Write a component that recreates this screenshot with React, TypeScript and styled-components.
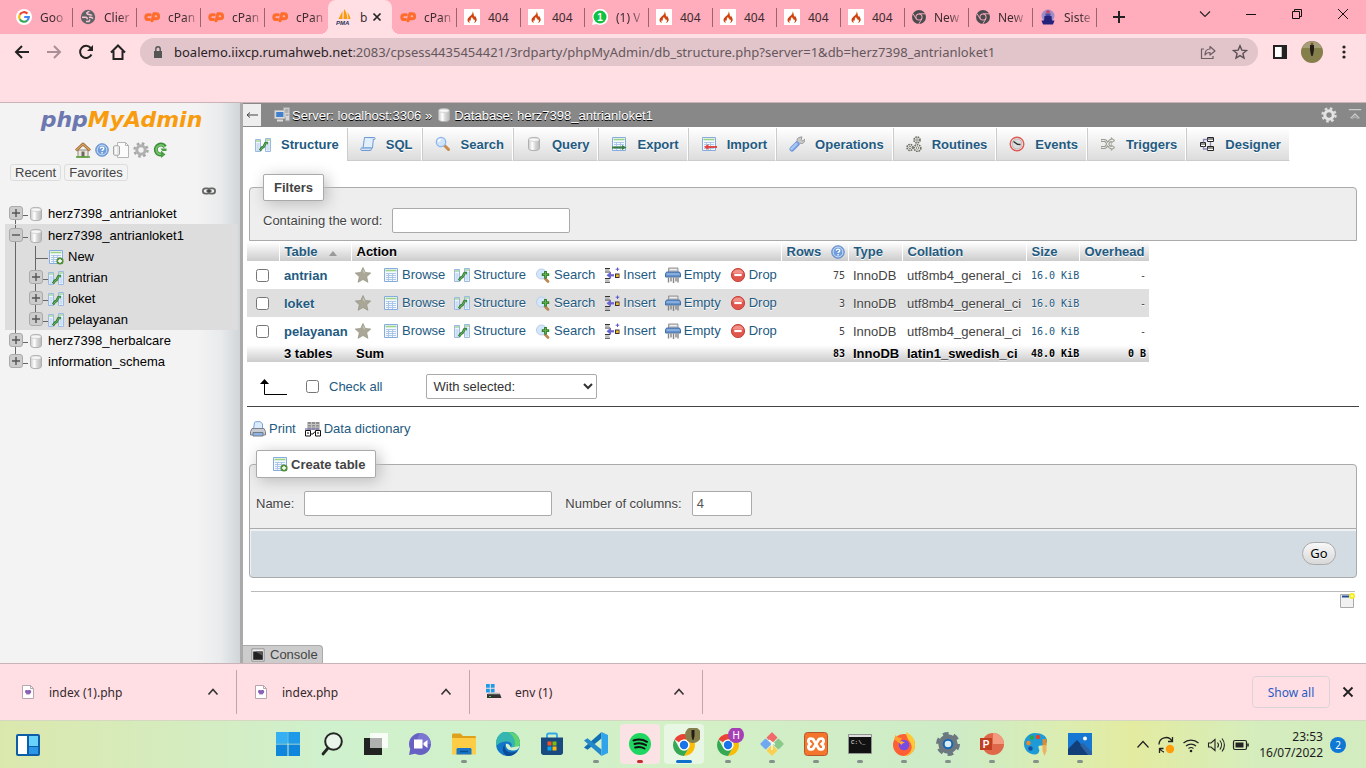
import React from "react";
import styled, { createGlobalStyle, css } from "styled-components";

const ui = `"Noto Sans", "Open Sans", sans-serif`;
const arial = `"Liberation Sans", Arial, sans-serif`;
const mono = `"DejaVu Sans Mono", "Liberation Mono", monospace`;
const linkColor = "#235a81";

const GlobalStyle = createGlobalStyle`
  * { box-sizing: border-box; }
  body { margin: 0; background: #fff; font-family: ${arial}; font-size: 13px; color: #444; }
  button { font: inherit; color: inherit; background: none; border: 0; padding: 0; margin: 0; }
  a { text-decoration: none; color: ${linkColor}; }
  svg { display: block; flex: none; }
  ul { list-style: none; margin: 0; padding: 0; }
`;

const Screen = styled.div`
  display: flex;
  flex-direction: column;
  min-height: 100vh;
  overflow: hidden;
`;

/* ---------- icons ---------- */

const Svg = ({ size = 16, box = 16, children }: { size?: number; box?: number; children: React.ReactNode }) => (
  <svg width={size} height={size} viewBox={`0 0 ${box} ${box}`} fill="none" aria-hidden="true">{children}</svg>
);

const GoogleIcon = () => (
  <Svg>
    <circle cx="8" cy="8" r="8" fill="#fff" />
    <g strokeWidth="2.2">
      <path d="M11.4 4.6A4.8 4.8 0 0 0 3.8 5.7" stroke="#ea4335" />
      <path d="M3.8 5.7a4.8 4.8 0 0 0 0 4.6" stroke="#fbbc05" />
      <path d="M3.8 10.3a4.8 4.8 0 0 0 7.3 1.3" stroke="#34a853" />
      <path d="M11.1 11.6A4.6 4.6 0 0 0 12.8 8H8.2" stroke="#4285f4" />
    </g>
  </Svg>
);
const GlobeIcon = () => (
  <Svg>
    <circle cx="8" cy="8" r="7.2" fill="#5f6368" />
    <path d="M9.5 2.500C6.500 3 6 4.500 8 5.200s3.500.3 4 1.300M2 8.300h3.500c1.500 0 2 .8 1.500 2M9 8.500c1.500-.5 3 0 4 1M6 12.500h3l1-2" stroke="#ffc4cf" strokeWidth="1.500" />
  </Svg>
);
const CpanelIcon = () => (
  <Svg>
    <g stroke="#ff6c2c" strokeWidth="3" strokeLinecap="round" strokeLinejoin="round">
      <path d="M6.300 5.800H4.200a2.300 2.300 0 0 0 0 4.800h1.300" />
      <path d="M8 11.800 9.800 4.800h2.400a2.400 2.400 0 0 1 0 5h-1.700" />
    </g>
  </Svg>
);
const PmaIcon = () => (
  <Svg>
    <path d="M6.500 2v8H2.500zM8 0c2 2 3 5 3.500 10H7.500zM11 3c2 2 3 4 3.500 7h-2.200c0-3-.3-5-1.300-7z" fill="#f89c0e" />
    <text x="0" y="16" fontSize="6" fontWeight="700" fontStyle="italic" fontFamily="Liberation Sans" fill="#26345c">PMA</text>
  </Svg>
);
const FireIcon = () => (
  <Svg>
    <path d="M0 0h16v16H0z" fill="#fff" />
    <path d="M8.400 2c.8 2-.2 3-1.600 4.400C5.200 8 3.300 9 3.500 11.200c.1 1.400 1.200 2.500 2.700 2.900-.9-.8-1.200-1.900-.5-2.900.5.6 1.200.5 1.100-.5 0-1.100.3-2 1.300-2.700-.1 1.500 1.800 1.700 1.800 3.200.5 0 .8-.4.8-.9.700 1.400.2 2.800-.9 3.800 2.300-.6 3.400-2.500 2.700-4.600-.4-1.200-1.200-1.900-1.400-3-.4.400-.5.8-.5 1.400C9.200 6.500 10.300 4.300 8.400 2z" fill="#cf4310" />
  </Svg>
);
const WhatsappIcon = () => (
  <Svg>
    <path d="M0 16 1.200 11.600A8 8 0 1 1 4.600 15z" fill="#fff" />
    <circle cx="8" cy="8" r="6.500" fill="#12c143" />
    <text x="5.200" y="11.500" fontSize="10" fontWeight="700" fontFamily="Liberation Sans" fill="#fff">1</text>
  </Svg>
);
const ChromeIcon = () => (
  <Svg size={14} box={24}>
    <circle cx="12" cy="12" r="12" fill="#4b4b4f" />
    <path d="M12 6.500h11M7 15 1.600 6M17 15l-5.500 9" stroke="#ffadbc" strokeWidth="1.600" />
    <circle cx="12" cy="12" r="6" fill="#ffadbc" />
    <circle cx="12" cy="12" r="4.400" fill="#4b4b4f" />
  </Svg>
);
const EmblemIcon = () => (
  <Svg>
    <circle cx="8" cy="7" r="6.500" fill="#9b8cc8" />
    <path d="M1.500 11.500h13l-1.500 4H3z" fill="#25227c" />
    <path d="M4.500 7h7l.5 5H4z" fill="#25227c" /><path d="M5.500 4.500h5V7h-5z" fill="#4a49a0" />
    <path d="M8 1v3.500M6 3h4" stroke="#d04060" strokeWidth="1.500" />
  </Svg>
);

const StructureIcon = () => (
  <Svg>
    <path d="M.5 2.500h5v12h-5zM10.500 1.500h5v13h-5z" fill="#f2f7fd" stroke="#9abae3" />
    <path d="M1 4h4M11 3h4" stroke="#a5d690" strokeWidth="1.400" />
    <path d="M1 7h4M1 9h4M1 11h4M1 13h4M11 6h4M11 8h4M11 10h4M11 12h4M3 6v8M13 5v9" stroke="#b9d0ec" strokeWidth=".8" />
    <path d="M5 13.500 7 10.500l1.500-.5L10.500 6h2.500" stroke="#2f7a35" strokeWidth="2.600" strokeLinejoin="round" />
    <path d="M5.500 13 7.200 10.500l1.500-.6 1.800-3.700h2" stroke="#6cba62" strokeWidth="1" />
  </Svg>
);
const Sheet = () => (
  <>
    <path d="M1.500 1.500h13v13h-13z" fill="#f5f9fe" stroke="#86acdf" />
    <path d="M2.500 3.500h11" stroke="#9ad388" strokeWidth="1.600" />
    <path d="M3 6.500h10M3 8.500h10M3 10.500h10M3 12.500h10M5.500 6v8M9.500 6v8" stroke="#a6c2e6" strokeWidth=".9" />
  </>
);
const BrowseIcon = () => <Svg><Sheet /></Svg>;
const NewTableIcon = () => (
  <Svg>
    <Sheet />
    <circle cx="12" cy="12" r="3.600" fill="#4f8f35" />
    <path d="M12 9.900v4.200M9.900 12h4.200" stroke="#fff" strokeWidth="1.400" />
  </Svg>
);
const ExportIcon = () => (
  <Svg>
    <Sheet />
    <path d="M1 11.500h11" stroke="#3a7d3c" strokeWidth="2" />
    <path d="m11 9 4.500 2.500L11 14z" fill="#3a7d3c" />
  </Svg>
);
const ImportIcon = () => (
  <Svg>
    <Sheet />
    <path d="M6 11h10" stroke="#e03a34" strokeWidth="1.800" />
    <path d="m7.500 8-4.500 3 4.500 3z" fill="#e8433c" />
  </Svg>
);
const SqlIcon = () => (
  <Svg>
    <path d="M4.500 1.500h9L12.500 12H3z" fill="#e2effc" stroke="#6f9ad3" />
    <path d="M4.500 1.500h10c.8 0 .8 2 0 2h-1.300" fill="#cfe2f8" stroke="#6f9ad3" />
    <path d="M1.500 12h10c-.5 1.500 0 2.500-1 2.500H1.500c-1 0-1-2.500 0-2.500z" fill="#cfe2f8" stroke="#6f9ad3" />
  </Svg>
);
const SearchIcon = () => (
  <Svg>
    <path d="m9.500 9.500 4 4" stroke="#c98a4b" strokeWidth="3" strokeLinecap="round" />
    <circle cx="6" cy="6" r="4.700" fill="#cfe3fa" stroke="#8fb6ea" strokeWidth="1.300" />
    <path d="M3.500 6A2.500 2.500 0 0 1 6 3.500" stroke="#fff" strokeWidth="1.300" />
  </Svg>
);
const SearchPlusIcon = () => (
  <Svg>
    <path d="m9.500 11 3.500 3.500" stroke="#b98752" strokeWidth="2.600" strokeLinecap="round" />
    <circle cx="6.500" cy="7" r="5" fill="#d5e6f8" stroke="#b5cfee" />
    <path d="M10.500 4v7.500M6.800 7.700h7.400" stroke="#2f7f2c" strokeWidth="2.800" />
    <path d="M10.500 5v5.500M8 7.700h5" stroke="#62b553" strokeWidth="1" />
  </Svg>
);
const DbIcon = () => (
  <Svg>
    <defs>
      <linearGradient id="cyl" x1="0" x2="1">
        <stop stopColor="#cacaca" /><stop offset=".35" stopColor="#fff" /><stop offset=".6" stopColor="#d8d8d8" /><stop offset="1" stopColor="#b8b8b8" />
      </linearGradient>
    </defs>
    <path d="M2.500 3.500c0-2.800 11-2.800 11 0v9c0 2.800-11 2.800-11 0z" fill="url(#cyl)" stroke="#b0b0b0" />
    <ellipse cx="8" cy="3.700" rx="5" ry="1.800" fill="#f6f6f6" stroke="#c4c4c4" strokeWidth=".6" />
  </Svg>
);
const WrenchIcon = () => (
  <Svg>
    <path d="M10 1.500 13 .8l-.8 3 1.600 1 2-1.600c.5 3-2 5-4.600 4.200L9.500 9 7 6.500l1-1.700c-.2-1.500.5-2.800 2-3.300z" fill="#c9c9c9" stroke="#8d8d8d" strokeWidth=".8" />
    <path d="m8 8-5 5" stroke="#6f98dd" strokeWidth="5" strokeLinecap="round" />
    <path d="m7.500 7.800-5 5" stroke="#a9c6f5" strokeWidth="2.500" strokeLinecap="round" />
  </Svg>
);
const RoutinesIcon = () => (
  <Svg>
    <g fill="#f2f2ee" stroke="#6c6c64" strokeWidth="1.600" strokeDasharray="1.600 .8">
      <circle cx="11" cy="4" r="3" /><circle cx="4" cy="11.500" r="3" /><circle cx="11.500" cy="12" r="3.300" />
    </g>
    <g fill="#fff" stroke="#6c6c64" strokeWidth=".8"><circle cx="11" cy="4" r="1.200" /><circle cx="4" cy="11.500" r="1.200" /><circle cx="11.500" cy="12" r="1.300" /></g>
  </Svg>
);
const EventsIcon = () => (
  <Svg>
    <circle cx="8" cy="8" r="6.800" fill="#f4f4f4" stroke="#e05a55" strokeWidth="1.400" />
    <circle cx="8" cy="8" r="5" fill="#ddd" stroke="#aaa" strokeWidth=".8" />
    <path d="m4.500 5.500 4 2.800 3 .2" stroke="#333" strokeWidth="1.500" />
  </Svg>
);
const TriggersIcon = () => (
  <Svg>
    <path d="M1 4.500h3.500c3 0 3.500 7 6.500 7h1M1 11.500h3.500c3 0 3.500-7 6.500-7h1" stroke="#9b9b94" strokeWidth="2.800" />
    <path d="m11 1.500 4 3-4 3zM11 8.500l4 3-4 3z" fill="#b8b8b0" stroke="#9b9b94" strokeWidth=".6" />
    <path d="M1.500 4.500h3c3 0 3.500 7 6.500 7h2M1.500 11.500h3c3 0 3.500-7 6.500-7h2" stroke="#efefea" strokeWidth="1" />
  </Svg>
);
const DesignerIcon = () => (
  <Svg>
    <path d="M8.500 1.500h6v4h-6zM8.500 10.500h6v4h-6zM1.500 6.500h5v4h-5z" fill="#fff" stroke="#222" />
    <path d="M8.500 3h6M8.500 12h6M1.500 8h5" stroke="#222" strokeWidth="1.200" />
    <path d="M4.500 6.500v-3h4M4.500 10.500v2.500h4M11.500 6v4" stroke="#8a87b8" strokeWidth="1.300" />
  </Svg>
);
const StarIcon = () => (
  <Svg>
    <path d="m8 .5 2.300 5 5.400.5-4 3.700 1.200 5.600L8 12.500l-4.900 2.800 1.200-5.600L.3 6l5.400-.5z" fill="#aaa797" stroke="#949284" strokeWidth=".7" />
    <path d="m8 3 1.500 3.500" stroke="#cfcdc2" />
  </Svg>
);
const InsertIcon = () => (
  <Svg>
    <path d="M1 1.500h5M1 15.300h5M1 5h5M1 11.500h5" stroke="#333" strokeWidth="1.100" />
    <path d="M1 3.200h4.500M1 13.400h4.500" stroke="#bbb" strokeWidth="2.200" />
    <path d="M5 8.300h5" stroke="#6a67d0" strokeWidth="2.200" />
    <path d="M7 4.500 2.500 8.300 7 12z" fill="#6a67d0" />
    <path d="M11 6.500h4.500V11H11z" fill="#333" /><path d="M12 7.500h2.800V10H12z" fill="#f2b430" />
    <path d="M13.500.5v3.500M11.700 2.200h3.600" stroke="#5a57c9" />
  </Svg>
);
const EmptyIcon = () => (
  <Svg>
    <path d="M3.500 1h9.500v4.500H3.500z" fill="#c9c9c9" stroke="#999" />
    <path d="M5 2.500h7" stroke="#f0f0f0" />
    <path d="M1.500 5h13l1 2v3H.5V7z" fill="#6793cb" stroke="#426fa8" />
    <path d="M1.500 7h13" stroke="#a7c7ec" />
    <path d="M3.500 10.500v5M6 10.500v4M8.500 10.500v5.500M11 10.500v4M13 10.500v5" stroke="#858585" strokeWidth="1.400" />
  </Svg>
);
const DropIcon = () => (
  <Svg>
    <circle cx="8" cy="8" r="6.600" fill="#e2554c" stroke="#c9463f" />
    <path d="M2.600 6.500a5.600 5.600 0 0 1 10.800 0z" fill="#f0918a" />
    <path d="M4.300 8h7.400" stroke="#fff" strokeWidth="2.200" />
  </Svg>
);
const HelpIcon = () => (
  <Svg size={14}>
    <circle cx="8" cy="8" r="7.200" fill="#6f9cda" stroke="#5d88c8" />
    <circle cx="8" cy="8" r="5.600" stroke="#d3e3f7" strokeWidth="1.100" />
    <path d="M6 6.400c.3-2.400 4.200-2.200 4 .2-.1 1.200-1.900 1.200-1.900 2.600M8.100 10.400v1.500" stroke="#fff" strokeWidth="1.600" />
  </Svg>
);
const HomeIcon = () => (
  <Svg>
    <path d="M3 8h10v7H3z" fill="#ece7dd" stroke="#8f8a80" />
    <path d="M1 8.500 8 2l7 6.500" stroke="#9b6b35" strokeWidth="3" strokeLinejoin="round" />
    <path d="M1.200 8.300 8 2l6.800 6.300" stroke="#d9a366" strokeWidth="1.200" />
    <path d="M6.500 9.500h3V15h-3z" fill="#6d6a66" /><path d="M1 15h14" stroke="#5aa03a" strokeWidth="1.600" />
  </Svg>
);
const DocsIcon = () => (
  <Svg>
    <path d="M4.500.5h8l3 3v12h-11z" fill="#fbfbfb" stroke="#b5b5b5" /><path d="M12.500.5v3h3" stroke="#b5b5b5" />
    <path d="M.5 5c0-2 6-2 6 0v7c0 2-6 2-6 0z" fill="#e5e5e5" stroke="#a5a5a5" /><path d="M3 5v7" stroke="#fff" strokeWidth="1.500" />
  </Svg>
);
const GearIcon = ({ light = false }: { light?: boolean }) => (
  <Svg>
    <circle cx="8" cy="8" r="6.500" stroke={light ? "#ddd" : "#a5a5a5"} strokeWidth="2.400" strokeDasharray="2.600 2.505" />
    <circle cx="8" cy="8" r="4.200" stroke={light ? "#e4e4e4" : "#b0b0b0"} strokeWidth="3" />
  </Svg>
);
const ReloadGreenIcon = () => (
  <Svg>
    <path d="M12 4.800A5 5 0 1 0 8.500 12.500" stroke="#3d8b3b" strokeWidth="4" />
    <path d="M11.700 5.100A4.600 4.600 0 1 0 8.500 12.200" stroke="#74c56a" strokeWidth="1.700" />
    <path d="M8 8.500V16l4.500-3.500zM7.500 6.500h6V9h-4z" fill="#4ba045" />
  </Svg>
);
const LinkIcon = () => (
  <Svg size={14}>
    <rect x="1" y="5" width="8" height="6" rx="3" stroke="#666" strokeWidth="2" />
    <rect x="7" y="5" width="8" height="6" rx="3" stroke="#666" strokeWidth="2" />
    <path d="M5 8h6" stroke="#333" strokeWidth="1.400" />
  </Svg>
);
const ServerIcon = () => (
  <Svg>
    <path d="M9.500.8h6v13h-4v-3h-2z" fill="#d8d8d8" stroke="#aaa" /><path d="M11 3h3.500M11 5h3.500M12 8h2.500" stroke="#888" />
    <path d="M.8 3.500h10v8H.8z" fill="#ddd" stroke="#bbb" /><path d="M2.200 5h7.200v5H2.200z" fill="#3f7fcb" />
    <path d="M3 13.500h6" stroke="#ddd" strokeWidth="2" />
  </Svg>
);
const PrintIcon = () => (
  <Svg>
    <path d="M3.500 8 4.500 1.500C4.600 1 5 .7 5.500.7h5L12.500 3v5z" fill="#dcebfb" stroke="#7ba3d4" />
    <path d="M2 7.500h12l1.500 3v3.500H.5v-3.500z" fill="#c8ccd2" stroke="#7d828a" />
    <path d="M3 11.500h10V15H3z" fill="#8db4e4" stroke="#777d86" />
  </Svg>
);
const DictionaryIcon = () => (
  <Svg>
    <path d="M2.500 1h12v8h-12z" fill="#8e8e8e" /><path d="M3 3.500h11M3 6h11M6.500 1v8M10.500 1v8" stroke="#c5c5c5" />
    <path d="M0 8h14" stroke="#8a87b8" strokeWidth="1.400" />
    <path d="M.5 9.500h5v5.500h-5zM10.500 9.500h5v5.500h-5z" fill="#fff" stroke="#111" /><path d="M2 12h2M12 12h2M6 13h2l1.500-2h1" stroke="#111" />
  </Svg>
);
const WindowIcon = () => (
  <Svg>
    <path d="M1.500 1.500h13v13h-13z" fill="#f1f1f1" stroke="#aaa" />
    <path d="M3 3.500h7" stroke="#1f4f9c" strokeWidth="2" />
    <circle cx="13" cy="3" r="3" fill="#f4ec1c" /><circle cx="13" cy="3" r="1.200" fill="#fffbb0" />
  </Svg>
);
const ConsoleIcon = () => (
  <Svg size={14}>
    <path d="M1 1h14v14H1z" fill="#eee" stroke="#888" /><path d="M2.500 4h11v9.500h-11z" fill="#222" /><path d="M13.500 4v5L5 4z" fill="#555" />
  </Svg>
);

/* ---------- browser tab strip ---------- */

const TabStrip = styled.div`
  display: flex;
  height: 34px;
  padding-left: 8px;
  background: #ffadbc;
  font-family: ${ui};
  font-size: 12px;
  color: #3c2b30;
`;
const BrowserTab = styled.div<{ $active?: boolean; $line?: boolean }>`
  position: relative;
  display: flex;
  align-items: center;
  gap: 8px;
  flex: 0 0 64px;
  padding-left: 8px;
  ${p => p.$line && css`
    &::after { content: ""; position: absolute; right: -1px; top: 8px; height: 19px; border-right: 1px solid #96656f; }
  `}
  ${p => p.$active && css`
    background: #ffdfe4;
    border-radius: 8px 8px 0 0;
    &::before { content: ""; position: absolute; left: -8px; right: -8px; bottom: 0; height: 8px;
      background: radial-gradient(circle at 0 0, transparent 8px, #ffdfe4 8px) left / 8px 8px no-repeat,
        radial-gradient(circle at 100% 0, transparent 8px, #ffdfe4 8px) right / 8px 8px no-repeat; }
  `}
`;
const TabTitle = styled.span<{ $fade?: boolean }>`
  white-space: nowrap;
  ${p => p.$fade && css`mask-image: linear-gradient(90deg, #000 60%, rgba(0, 0, 0, .35));`}
`;
const IconButton = styled.button<{ $w?: number }>`
  display: flex;
  align-items: center;
  justify-content: center;
  flex: none;
  width: ${p => p.$w ?? 32}px;
`;
const WindowButtons = styled.div`
  display: flex;
  flex: none;
  margin-left: auto;
  padding-bottom: 6px;
`;
const CloseTab = styled(IconButton)`
  margin-left: -6px;
`;

const tabs: [React.ReactNode, string][] = [
  [<GoogleIcon />, "Goo"], [<GlobeIcon />, "Clier"], [<CpanelIcon />, "cPan"], [<CpanelIcon />, "cPan"],
  [<CpanelIcon />, "cPan"], [<PmaIcon />, "b"], [<CpanelIcon />, "cPan"], [<FireIcon />, "404"], [<FireIcon />, "404"],
  [<WhatsappIcon />, "(1) V"], [<FireIcon />, "404"], [<FireIcon />, "404"], [<FireIcon />, "404"], [<FireIcon />, "404"],
  [<ChromeIcon />, "New"], [<ChromeIcon />, "New"], [<EmblemIcon />, "Siste"],
];
const ACTIVE = 5;

const BrowserTabs = () => (
  <TabStrip>
    {tabs.map(([icon, title], i) => (
      <BrowserTab key={i} $active={i === ACTIVE} $line={i !== ACTIVE && i !== ACTIVE - 1}>
        {icon}
        <TabTitle $fade={title !== "404" && i !== ACTIVE}>{title}</TabTitle>
        {i === ACTIVE && (
          <CloseTab $w={16} aria-label="Close tab">
            <Svg size={10} box={10}><path d="m1.500 1.500 7 7m0-7-7 7" stroke="#222" strokeWidth="1.700" /></Svg>
          </CloseTab>
        )}
      </BrowserTab>
    ))}
    <IconButton $w={46} aria-label="New tab">
      <Svg size={12} box={12}><path d="M6 0v12M0 6h12" stroke="#222" strokeWidth="2" /></Svg>
    </IconButton>
    <WindowButtons>
      <IconButton $w={46} aria-label="Search tabs"><Svg size={12} box={12}><path d="m1 3.500 5 5 5-5" stroke="#222" strokeWidth="1.100" /></Svg></IconButton>
      <IconButton $w={46} aria-label="Minimize"><Svg size={12} box={12}><path d="M1 6.500h10" stroke="#111" /></Svg></IconButton>
      <IconButton $w={46} aria-label="Restore"><Svg size={12} box={12}><path d="M1.500 3.500h7v7h-7zM3.500 3.500v-2h7v7h-2" stroke="#111" /></Svg></IconButton>
      <IconButton $w={46} aria-label="Close"><Svg size={12} box={12}><path d="m1 1 10 10M11 1 1 11" stroke="#111" /></Svg></IconButton>
    </WindowButtons>
  </TabStrip>
);

/* ---------- browser toolbar ---------- */

const Toolbar = styled.div`
  flex: none;
  height: 69px;
  padding: 4px 6px 0;
  background: #ffdfe4;
  border-bottom: 1px solid #c9b3b7;
`;
const ToolbarRow = styled.div`
  display: flex;
  height: 28px;
`;
const AddressBar = styled.div`
  display: flex;
  align-items: center;
  flex: 1;
  min-width: 0;
  margin: 0 6px;
  padding: 0 2px 0 12px;
  border-radius: 14px;
  background: #e1c5ca;
`;
const Url = styled.span`
  flex: 1;
  overflow: hidden;
  margin-left: 10px;
  font-family: ${ui};
  font-size: 13px;
  white-space: nowrap;
  color: #66575c;
  b { font-weight: 400; color: #2b2226; }
`;

const BrowserToolbar = () => (
  <Toolbar>
    <ToolbarRow>
      <IconButton aria-label="Back"><Svg><path d="M15 8H2M8 2 2 8l6 6" stroke="#222" strokeWidth="2" /></Svg></IconButton>
      <IconButton aria-label="Forward"><Svg><path d="M1 8h13M8 2l6 6-6 6" stroke="#a98f95" strokeWidth="2" /></Svg></IconButton>
      <IconButton aria-label="Reload"><Svg><path d="M13.500 10.500A6 6 0 1 1 12.700 4L14 5.500" stroke="#222" strokeWidth="2" /><path d="M15 1v6H9z" fill="#222" /></Svg></IconButton>
      <IconButton aria-label="Home"><Svg><path d="M1 8.500 8 1.500l7 7M3.500 7v8h9V7" stroke="#222" strokeWidth="2" /></Svg></IconButton>
      <AddressBar>
        <Svg size={12} box={12}><path d="M2 5h8v7H2z" fill="#555" /><path d="M3.800 5V3a2.200 2.200 0 0 1 4.400 0v2" stroke="#555" strokeWidth="1.400" /></Svg>
        <Url><b>boalemo.iixcp.rumahweb.net</b>:2083/cpsess4435454421/3rdparty/phpMyAdmin/db_structure.php?server=1&amp;db=herz7398_antrianloket1</Url>
        <IconButton aria-label="Share"><Svg><path d="M4 5H1.500v9.500H13V12M5 11c0-4 2-6 5-6V2.500l5 4.500-5 4V8.500c-2.500 0-4 .5-5 2.500z" stroke="#6b5d61" strokeWidth="1.200" strokeLinejoin="round" /></Svg></IconButton>
        <IconButton aria-label="Bookmark"><Svg><path d="m8 1.800 1.800 4.300 4.700.4-3.600 3 1.100 4.600-4-2.500-4 2.500 1.100-4.600-3.600-3 4.700-.4z" stroke="#5c5054" strokeWidth="1.400" /></Svg></IconButton>
      </AddressBar>
      <IconButton aria-label="Side panel"><Svg size={14} box={14}><path d="M1 1h12v12H1z" stroke="#222" strokeWidth="2" /><path d="M8.500 1h5v12h-5z" fill="#222" /><path d="M2 2h6.500v10H2z" fill="#fff" /></Svg></IconButton>
      <IconButton aria-label="Profile">
        <Svg size={22} box={22}>
          <circle cx="11" cy="11" r="11" fill="#857f4b" /><path d="M1 7a11 11 0 0 1 20 0z" fill="#a69e78" />
          <path d="M9 4h4v5l-1 5-.5 1h-1L10 14 9 9z" fill="#221e17" /><circle cx="11" cy="3" r="1.300" fill="#7e4f38" />
        </Svg>
      </IconButton>
      <IconButton aria-label="Menu"><Svg><g fill="#222"><circle cx="8" cy="3" r="1.600" /><circle cx="8" cy="8" r="1.600" /><circle cx="8" cy="13" r="1.600" /></g></Svg></IconButton>
    </ToolbarRow>
  </Toolbar>
);

/* ---------- navigation panel ---------- */

const PageArea = styled.div`
  display: flex;
  flex: 1;
`;
const NavPanel = styled.nav`
  flex: none;
  width: 243px;
  padding: 3px 2px 0 5px;
  background: linear-gradient(90deg, #f3f3f3 82%, #e9ebec 92%, #d0d5d8);
  border-right: 3px solid #aaa;
`;
const Logo = styled.div`
  font: italic 700 22px/28px "DejaVu Sans", sans-serif;
  text-align: center;
  color: #6c78af;
  span { color: #f89c0e; }
`;
const NavIcons = styled.div`
  display: flex;
  justify-content: center;
  align-items: center;
  gap: 4px;
  margin: 8px 0 6px;
`;
const QuickRow = styled.div`
  display: flex;
  gap: 3px;
  padding-left: 5px;
`;
const QuickButton = styled.button`
  height: 17px;
  padding: 0 4px;
  border: 1px solid #ddd;
  border-radius: 3px;
  line-height: 15px;
`;
const LinkRow = styled.div`
  display: flex;
  justify-content: flex-end;
  height: 22px;
  padding: 3px 22px 0 0;
`;
const TreeGroup = styled.ul`
  padding-top: 1px;
  background: #ddd;
`;
const TreeRow = styled.li`
  display: flex;
  align-items: center;
  height: 21px;
  padding-left: 4px;
`;
const TreeLink = styled.a`
  margin-left: 4px;
  color: #000;
`;

type GuideKind = "plus" | "minus" | "line" | "new";
const Guide = ({ kind, first, last }: { kind: GuideKind; first?: boolean; last?: boolean }) => {
  const w = kind === "line" ? 20 : 19;
  return (
    <svg width={w} height="21" viewBox={`0 0 ${w} 21`} fill="none" aria-hidden="true">
      <path d={`M6.500 ${first ? 8 : 0}V${last ? 8 : 21}`} stroke="#666" />
      {kind !== "line" && <path d="M6.500 12.500H20" stroke="#666" />}
      {(kind === "plus" || kind === "minus") && (
        <>
          <rect x=".5" y="3.500" width="13" height="13" rx="2.500" fill="#ccc" stroke="#aaa" />
          <path d={kind === "plus" ? "M3 10h8M7 6v8" : "M3 10h8"} stroke="#555" strokeWidth="1.400" />
        </>
      )}
    </svg>
  );
};

const Navigation = () => (
  <NavPanel>
    <Logo>php<span>MyAdmin</span></Logo>
    <NavIcons><HomeIcon /><HelpIcon /><DocsIcon /><GearIcon /><ReloadGreenIcon /></NavIcons>
    <QuickRow><QuickButton>Recent</QuickButton><QuickButton>Favorites</QuickButton></QuickRow>
    <LinkRow><LinkIcon /></LinkRow>
    <ul>
      <TreeRow><Guide kind="plus" first /><DbIcon /><TreeLink href="#">herz7398_antrianloket</TreeLink></TreeRow>
    </ul>
    <TreeGroup>
      <TreeRow><Guide kind="minus" /><DbIcon /><TreeLink href="#">herz7398_antrianloket1</TreeLink></TreeRow>
      <TreeRow><Guide kind="line" /><Guide kind="new" /><NewTableIcon /><TreeLink href="#">New</TreeLink></TreeRow>
      {["antrian", "loket", "pelayanan"].map(t => (
        <TreeRow key={t}><Guide kind="line" /><Guide kind="plus" last={t === "pelayanan"} /><StructureIcon /><TreeLink href="#">{t}</TreeLink></TreeRow>
      ))}
    </TreeGroup>
    <ul>
      <TreeRow><Guide kind="plus" /><DbIcon /><TreeLink href="#">herz7398_herbalcare</TreeLink></TreeRow>
      <TreeRow><Guide kind="plus" last /><DbIcon /><TreeLink href="#">information_schema</TreeLink></TreeRow>
    </ul>
  </NavPanel>
);

/* ---------- main panel ---------- */

const Main = styled.main`
  display: flex;
  flex-direction: column;
  flex: 1;
  min-width: 0;
`;
const ServerBar = styled.div`
  display: flex;
  align-items: center;
  height: 24px;
  padding-right: 4px;
  background: #888;
  color: #fff;
  text-shadow: 0 1px 0 #000;
  a { color: #fff; }
`;
const CollapseButton = styled.button`
  width: 18px;
  height: 22px;
  margin-right: 13px;
  background: #eee;
  display: flex;
  align-items: center;
  justify-content: center;
`;
const Crumb = styled.a`
  display: flex;
  align-items: center;
  gap: 2px;
  margin-right: 4px;
`;
const ServerTools = styled.div`
  display: flex;
  gap: 11px;
  margin-left: auto;
`;
const MenuTabs = styled.div`
  display: flex;
  margin: 1px 0 13px;
  font-weight: 700;
`;
const MenuTab = styled.a<{ $active?: boolean }>`
  display: flex;
  align-items: center;
  gap: 10px;
  height: 33px;
  padding: 0 8px 0 12px;
  border-left: 1px solid #ccc;
  border-right: 1px solid #fff;
  border-bottom: 1px solid #ccc;
  background: linear-gradient(#fff, #dcdcdc);
  text-shadow: 0 1px 0 #fff;
  white-space: nowrap;
  ${p => p.$active && css`
    padding: 0 8px 0 12px;
    border-width: 0;
    background: #fff;
  `}
`;
const menu: [React.ReactNode, string][] = [
  [<StructureIcon />, "Structure"], [<SqlIcon />, "SQL"], [<SearchIcon />, "Search"], [<DbIcon />, "Query"],
  [<ExportIcon />, "Export"], [<ImportIcon />, "Import"], [<WrenchIcon />, "Operations"], [<RoutinesIcon />, "Routines"],
  [<EventsIcon />, "Events"], [<TriggersIcon />, "Triggers"], [<DesignerIcon />, "Designer"],
];

const Fieldset = styled.fieldset<{ $inset: number }>`
  margin: 0 9px 0 6px;
  padding: 0 ${p => p.$inset}px;
  min-width: 0;
  border: 1px solid #aaa;
  border-radius: 4px 4px 0 0;
  background: #eee;
  text-shadow: 0 1px 0 #fff;
`;
const Legend = styled.legend`
  display: flex;
  align-items: center;
  gap: 3px;
  height: 27px;
  padding: 0 10px;
  border: 1px solid #aaa;
  border-radius: 2px;
  background: #fff;
  box-shadow: 3px 3px 15px #bbb;
  font-weight: 700;
`;
const CreateLegend = styled(Legend)`
  height: 28px;
  padding-left: 15px;
`;
const FormRow = styled.div<{ $top: number; $bottom: number }>`
  display: flex;
  align-items: center;
  padding: ${p => p.$top}px 0 ${p => p.$bottom}px;
`;
const TextInput = styled.input<{ $w: number }>`
  width: ${p => p.$w}px;
  height: 25px;
  margin: 0 13px 0 10px;
  padding: 0 4px;
  border: 1px solid #aaa;
  border-radius: 2px;
  background: #fff;
  color: #555;
  font: inherit;
  appearance: textfield;
  &::-webkit-inner-spin-button { appearance: none; }
`;

const DataTable = styled.table`
  width: 902px;
  margin: 1px 0 0 4px;
  table-layout: fixed;
  border-collapse: collapse;
  text-shadow: 0 1px 0 #fff;
  white-space: nowrap;
  th, td { padding: 0 3px 0 5px; text-align: left; }
  thead tr, tfoot tr { background: linear-gradient(#fff, #ccc); color: #000; font-weight: 700; }
  thead tr { height: 19px; }
  tfoot tr { height: 17px; }
  thead th + th { border-left: 1px solid #fff; }
  tbody tr { height: 28px; }
  tbody tr:nth-child(even) { background: #dfdfdf; }
`;
const NumCell = styled.td`
  && { text-align: right; font-family: ${mono}; font-size: 10px; }
`;
const SortLink = styled.a`
  display: flex;
  align-items: center;
  justify-content: space-between;
`;
const SortMark = styled.span`
  margin: 3px 11px 0 0;
  border: 4px solid transparent;
  border-top: 0;
  border-bottom: 5px solid #999;
`;
const Check = styled.input`
  display: block;
  width: 13px;
  height: 13px;
  margin: 0 0 0 4px;
`;
const Actions = styled.div`
  display: flex;
  gap: 9px;
`;
const ActionLink = styled.a`
  display: flex;
  align-items: center;
  gap: 3px;
  line-height: 16px;
`;
const StarLink = styled(ActionLink)`
  margin: 0 3px 0 -1px;
`;
const actions: [React.ReactNode, string][] = [
  [<BrowseIcon />, "Browse"], [<StructureIcon />, "Structure"], [<SearchPlusIcon />, "Search"],
  [<InsertIcon />, "Insert"], [<EmptyIcon />, "Empty"], [<DropIcon />, "Drop"],
];
const rows: [string, number][] = [["antrian", 75], ["loket", 3], ["pelayanan", 5]];
const cols = [32, 72, 430, 67, 54, 124, 53, 70];

const BulkRow = styled.div`
  display: flex;
  align-items: center;
  height: 45px;
  margin: 0 7px 0 4px;
  padding: 5px 0 0 11px;
  border-bottom: 1px solid #444;
  label { margin: 0 44px 0 10px; color: ${linkColor}; }
`;
const BulkCheck = styled(Check)`
  margin-left: 19px;
`;
const Select = styled.select`
  width: 171px;
  height: 25px;
  padding: 0 2px;
  border: 1px solid #aaa;
  border-radius: 2px;
  background: #fff;
  color: #333;
  font: inherit;
`;
const PrintRow = styled.div`
  display: flex;
  align-items: center;
  gap: 9px;
  height: 43px;
  padding-left: 7px;
`;
const SubmitBar = styled.div`
  display: flex;
  align-items: center;
  justify-content: flex-end;
  height: 50px;
  margin: -1px 9px 13px 6px;
  padding-right: 20px;
  border: 1px solid #aaa;
  border-radius: 0 0 4px 4px;
  background: #d3dce3;
  box-shadow: inset 1px 2px 1px #f0f3f6;
`;
const GoButton = styled.button`
  width: 34px;
  height: 23px;
  border: 1px solid #aaa;
  border-radius: 12px;
  background: linear-gradient(#f8f8f8, #d8d8d8);
  color: #000;
  font-family: "Noto Sans", sans-serif;
  text-shadow: 0 1px 0 #fff;
`;
const Footer = styled.div`
  display: flex;
  justify-content: flex-end;
  margin: 0 11px 0 8px;
  padding-top: 1px;
  border-top: 1px solid #bbb;
`;
const Console = styled.button`
  display: flex;
  align-items: center;
  align-self: flex-start;
  gap: 5px;
  height: 18px;
  margin-top: auto;
  padding: 0 4px 0 8px;
  border: 1px solid #aaa;
  border-width: 1px 1px 0 0;
  border-radius: 0 4px 0 0;
  background: #ccc;
`;

const MainPanel = () => (
  <Main>
    <ServerBar>
      <CollapseButton aria-label="Hide panel"><Svg size={12} box={12}><path d="M12 6H1M4 3.500 1 6l3 2.500" stroke="#444" strokeWidth="1" /></Svg></CollapseButton>
      <Crumb href="#"><ServerIcon />Server: localhost:3306 »</Crumb>
      <Crumb href="#"><DbIcon />Database: herz7398_antrianloket1</Crumb>
      <ServerTools>
        <GearIcon light />
        <Svg size={14}><path d="M1 3h14M3 13l5-5 5 5" stroke="#ccc" strokeWidth="1.500" /><path d="m5 13.500 3-2.500 3 2.500" stroke="#ccc" /></Svg>
      </ServerTools>
    </ServerBar>
    <MenuTabs>
      {menu.map(([icon, label], i) => <MenuTab key={label} href="#" $active={i === 0}>{icon}{label}</MenuTab>)}
    </MenuTabs>

    <Fieldset $inset={13}>
      <Legend>Filters</Legend>
      <FormRow $top={7} $bottom={7}>
        <label htmlFor="filter">Containing the word:</label>
        <TextInput id="filter" type="text" $w={178} />
      </FormRow>
    </Fieldset>

    <DataTable>
      <colgroup>{cols.map((w, i) => <col key={i} style={{ width: w }} />)}</colgroup>
      <thead>
        <tr>
          <th />
          <th><SortLink href="#">Table<SortMark /></SortLink></th>
          <th>Action</th>
          <th><SortLink href="#">Rows<HelpIcon /></SortLink></th>
          <th><a href="#">Type</a></th>
          <th><a href="#">Collation</a></th>
          <th><a href="#">Size</a></th>
          <th><a href="#">Overhead</a></th>
        </tr>
      </thead>
      <tbody>
        {rows.map(([name, count]) => (
          <tr key={name}>
            <td><Check type="checkbox" aria-label={name} /></td>
            <td><a href="#"><b>{name}</b></a></td>
            <td>
              <Actions>
                <StarLink href="#" aria-label="Favorite"><StarIcon /></StarLink>
                {actions.map(([icon, label]) => <ActionLink key={label} href="#">{icon}{label}</ActionLink>)}
              </Actions>
            </td>
            <NumCell>{count}</NumCell>
            <td>InnoDB</td>
            <td>utf8mb4_general_ci</td>
            <NumCell><a href="#">16.0 KiB</a></NumCell>
            <NumCell>-</NumCell>
          </tr>
        ))}
      </tbody>
      <tfoot>
        <tr>
          <td />
          <td>3 tables</td>
          <td>Sum</td>
          <NumCell>83</NumCell>
          <td>InnoDB</td>
          <td>latin1_swedish_ci</td>
          <NumCell>48.0 KiB</NumCell>
          <NumCell>0 B</NumCell>
        </tr>
      </tfoot>
    </DataTable>

    <BulkRow>
      <svg width="29" height="16" viewBox="0 0 29 16" fill="none" aria-hidden="true"><path d="M6.500 3v12.500H29" stroke="#000" /><path d="M6.500 0 11 5H2z" fill="#000" /></svg>
      <BulkCheck id="checkall" type="checkbox" />
      <label htmlFor="checkall">Check all</label>
      <Select aria-label="With selected"><option>With selected:</option></Select>
    </BulkRow>

    <PrintRow>
      <ActionLink href="#"><PrintIcon />Print</ActionLink>
      <ActionLink href="#"><DictionaryIcon />Data dictionary</ActionLink>
    </PrintRow>

    <Fieldset $inset={6}>
      <CreateLegend><NewTableIcon />Create table</CreateLegend>
      <FormRow $top={13} $bottom={12}>
        <label htmlFor="tname">Name:</label>
        <TextInput id="tname" type="text" $w={248} />
        <label htmlFor="tcols">Number of columns:</label>
        <TextInput id="tcols" type="number" defaultValue={4} $w={60} />
      </FormRow>
    </Fieldset>
    <SubmitBar><GoButton>Go</GoButton></SubmitBar>
    <Footer><WindowIcon /></Footer>
    <Console><ConsoleIcon />Console</Console>
  </Main>
);

/* ---------- download shelf ---------- */

const Shelf = styled.div`
  display: flex;
  align-items: center;
  flex: none;
  height: 57px;
  padding-right: 12px;
  background: #ffdfe4;
  border-top: 1px solid #c9b3b7;
  font-family: ${ui};
  font-size: 12px;
  color: #33282b;
`;
const Download = styled.div<{ $first?: boolean }>`
  display: flex;
  align-items: center;
  flex: 0 1 ${p => (p.$first ? 237 : 233)}px;
  height: 44px;
  padding: 0 16px 0 ${p => (p.$first ? 20 : 16)}px;
  border-right: 1px solid #c0a5aa;
  span { flex: 1; margin-left: 13px; }
`;
const ShowAll = styled.button`
  width: 78px;
  height: 32px;
  margin: 0 12px 0 auto;
  border: 1px solid #dcd3da;
  border-radius: 4px;
  color: #2a5cc4;
`;
const PhpFile = () => (
  <Svg><path d="M2.500 1.500h8l3 3v10h-11z" fill="#fff" stroke="#b5a5b0" /><path d="M10.500 1.500v3h3" stroke="#b5a5b0" /><path d="M5 7.500C5 6 7 5.800 8 6.500c1-.7 3.200-.5 3.200 1.200S10 9 9.500 10.500H8.300l-.3-1-.3 1H6.500C6.300 9 5 9 5 7.500z" fill="#8a62b5" /></Svg>
);
const EnvFile = () => (
  <Svg><path d="M0 0h3.800v3.800H0zM4.800 0h3.800v3.800H4.800zM0 4.800h3.800v3.800H0zM4.800 4.800h3.800v3.800H4.800z" fill="#1c9be6" /><path d="M1 10h13l1.500 4H1z" fill="#333" /><path d="M2 9.500h12" stroke="#bbb" strokeWidth="1.500" /><path d="M3 12.500h2" stroke="#4dd04d" /></Svg>
);
const ChevronUp = () => <Svg size={12} box={12}><path d="m1.500 8.500 4.500-5 4.500 5" stroke="#333" strokeWidth="1.600" /></Svg>;

const DownloadShelf = () => (
  <Shelf>
    {["index (1).php", "index.php", "env (1)"].map((name, i) => (
      <Download key={name} $first={i === 0}>
        {i === 2 ? <EnvFile /> : <PhpFile />}
        <span>{name}</span>
        <IconButton $w={14} aria-label="Options"><ChevronUp /></IconButton>
      </Download>
    ))}
    <ShowAll>Show all</ShowAll>
    <IconButton $w={12} aria-label="Close shelf"><Svg size={12} box={12}><path d="m1.500 1.500 9 9m0-9-9 9" stroke="#222" strokeWidth="1.900" /></Svg></IconButton>
  </Shelf>
);

/* ---------- taskbar ---------- */

const Taskbar = styled.div`
  display: grid;
  grid-template-columns: 1fr auto 1fr;
  flex: none;
  height: 48px;
  background: linear-gradient(90deg, #dbe8ad, #d3edc4 17%, #cff1cd 24%, #d3f0c6 50%, #cdebc6 70%, #dcedb0 78%, #e3eba0 83%, #d5edbd 92%, #d2ecc0);
  border-top: 1px solid #d5d8c0;
  font-family: ${ui};
  font-size: 12px;
  color: #1c1c1c;
`;
const Widgets = styled.div`
  display: flex;
  align-items: center;
  padding-left: 16px;
`;
const Apps = styled.div`
  display: flex;
  padding-left: 1px;
`;
const AppButton = styled.button<{ $tint?: string; $mark?: string; $wide?: boolean }>`
  position: relative;
  display: flex;
  align-items: center;
  justify-content: center;
  width: 40px;
  height: 40px;
  margin: 3px 2px;
  border-radius: 4px;
  background: ${p => p.$tint ?? "transparent"};
  ${p => p.$mark && css`
    &::after { content: ""; position: absolute; bottom: 1px; width: ${p.$wide ? 16 : 6}px; height: 3px; border-radius: 2px; background: ${p.$mark}; }
  `}
`;
const Tray = styled.div`
  display: flex;
  align-items: center;
  justify-content: flex-end;
  gap: 7px;
  padding-right: 20px;
`;
const Clock = styled.div`
  margin-left: 2px;
  text-align: right;
  line-height: 16px;
`;
const Badge = styled.span`
  width: 16px;
  height: 16px;
  border-radius: 8px;
  background: #0f78d4;
  color: #fff;
  font-size: 10px;
  line-height: 16px;
  text-align: center;
`;

const Chrome = () => (
  <g transform="translate(4 5)">
    <path d="M12 1a11 11 0 0 1 9.500 5.500H12A5.500 5.500 0 0 0 7.200 9.300L2.500 6.500A11 11 0 0 1 12 1z" fill="#ea4335" />
    <path d="M21.500 6.500A11 11 0 0 1 12 23l4.800-8.200A5.500 5.500 0 0 0 12 6.500z" fill="#fbbc04" />
    <path d="m2.500 6.500 4.700 8.300a5.500 5.500 0 0 0 9.600 0L12 23A11 11 0 0 1 2.500 6.500z" fill="#34a853" />
    <circle cx="12" cy="12" r="5.500" fill="#fff" /><circle cx="12" cy="12" r="4.200" fill="#1a73e8" />
  </g>
);
const AppGlyph = ({ children }: { children: React.ReactNode }) => <Svg size={24} box={24}>{children}</Svg>;
type AppItem = { label: string; icon: React.ReactNode; tint?: string; mark?: string; wide?: boolean };
const grey = "#84908a";
const apps: AppItem[] = [
  { label: "Start", icon: <AppGlyph><path d="M0 0h11.500v11.500H0zM12.500 0H24v11.500H12.500zM0 12.500h11.500V24H0zM12.500 12.500H24V24H12.500z" fill="#0f86dc" /><path d="M0 0h11.500v11.500H0z" fill="#35b0f2" /><path d="M12.500 0H24v11.500H12.500z" fill="#1f9ae8" /></AppGlyph> },
  { label: "Search", icon: <AppGlyph><circle cx="13.500" cy="9.500" r="8.300" fill="#e9f5ea" stroke="#252525" strokeWidth="2" /><path d="m8 16-5 6" stroke="#252525" strokeWidth="2.800" strokeLinecap="round" /></AppGlyph> },
  { label: "Task view", icon: <AppGlyph><path d="M0 6h18v17H0z" fill="#222" /><path d="M6 1h18v15H6z" fill="#fff" fillOpacity=".85" /><path d="M6 6h12v10H6z" fill="#aeb1ae" /></AppGlyph> },
  { label: "Chat", icon: <AppGlyph><path d="M12 1a11 11 0 1 1-5 20.800L1 23l1.200-6A11 11 0 0 1 12 1z" fill="#6861c4" /><path d="M12 1a11 11 0 0 1 11 11H7z" fill="#8b85dd" fillOpacity=".6" /><path d="M6 7.500h8.500v9H6zM15.500 11l4-3v8l-4-3z" fill="#fff" /></AppGlyph> },
  { label: "Files", mark: grey, icon: <AppGlyph><path d="M0 3c0-1 .5-1.500 1.500-1.500h7L11 4h11.500c1 0 1.500.6 1.500 1.500V9H0z" fill="#e0a11a" /><path d="M0 6h24v16.500H0z" fill="#fccd45" /><path d="M4.500 22.500v-5c0-1 .8-1.500 1.500-1.500h12c1 0 1.500.7 1.500 1.500v5z" fill="#1777c6" /><path d="M8 19.500h8" stroke="#0b4f94" strokeWidth="1.500" /></AppGlyph> },
  { label: "Edge", icon: <AppGlyph><circle cx="12" cy="12" r="12" fill="#1277c9" /><path d="M0 11A12 12 0 0 1 24 11c0 4-3 5.500-6 5.500-2.500 0-3.500-1-2.500-2.500 1-2-1-4.500-4-4.500C6 9.500 2 11 0 15z" fill="#36b6b0" /><path d="M12 0c7 0 12 5 12 11 0 3.500-3.500 5.500-6.500 5.500 3-4 2-12-5.500-16.500z" fill="#5fd46f" /><path d="M9 12c-1.500 4 1 8 5.500 8.500 2.500.2 4.500-.5 7-1.500-2.500 3.500-6 5-9.500 5-5-1-7-8-3-12z" fill="#0c4c96" /><path d="M10 12c-1 3 1.500 6.500 6 6.500 2.500 0 4.500-.5 6-1.500L24 14l-9 1.500c-1-2-3-4.500-5-3.500z" fill="#d3efcb" /></AppGlyph> },
  { label: "Store", icon: <AppGlyph><path d="M7 6V3c0-1 .7-1.500 1.500-1.500h7c.8 0 1.500.5 1.500 1.500v3" stroke="#2fa9ea" strokeWidth="1.800" /><path d="M1 5.500h22v15c0 1.500-1 2.500-2.500 2.500h-17C2 23 1 22 1 20.500z" fill="#184a7f" /><path d="M7.500 9.500h4v4h-4z" fill="#f35325" /><path d="M12.500 9.500h4v4h-4z" fill="#81bc06" /><path d="M7.500 14.500h4v4h-4z" fill="#05a6f0" /><path d="M12.500 14.500h4v4h-4z" fill="#ffba08" /></AppGlyph> },
  { label: "Code", mark: grey, icon: <AppGlyph><path d="m17.500 6.500-14 11.300L0 15.500 17.500 0z" fill="#1070b3" /><path d="m17.500 17.500-14-11.300L0 8.500 17.500 24z" fill="#2489ca" /><path d="m17.500 0 6.500 3v18l-6.500 3z" fill="#2fa4ea" /></AppGlyph> },
  { label: "Music", tint: "#fbe2e4", mark: "#c42b2b", icon: <AppGlyph><circle cx="12" cy="12" r="11" fill="#1ed760" /><path d="M5.500 8.500c4.500-1.500 9.500-1 13.500 1.300M6.500 12c4-1.200 8-.8 11.500 1.200M7.200 15.500c3.200-1 6.500-.6 9.300 1" stroke="#111" strokeWidth="2" strokeLinecap="round" /></AppGlyph> },
  { label: "Browser", tint: "#e8f6e4", mark: "#0f70cc", wide: true, icon: <Svg size={32} box={32}><Chrome /><circle cx="25" cy="7" r="8" fill="#857f4b" /><path d="M23.500 2h3v6l-1 4h-1l-1-4z" fill="#221e17" /></Svg> },
  { label: "Browser H", mark: grey, icon: <Svg size={32} box={32}><Chrome /><circle cx="24" cy="7" r="8" fill="#a63fb5" /><text x="20.500" y="10.500" fontSize="10" fontFamily="Liberation Sans" fill="#fff">H</text></Svg> },
  { label: "Git", mark: grey, icon: <AppGlyph><g transform="rotate(45 12 12)"><rect x="3.500" y="3.500" width="8" height="8" rx="1" fill="#f16a6a" /><rect x="12.500" y="3.500" width="8" height="8" rx="1" fill="#8bc98b" /><rect x="3.500" y="12.500" width="8" height="8" rx="1" fill="#6fa8f0" /><rect x="12.500" y="12.500" width="8" height="8" rx="1" fill="#fbd04e" /></g><path d="m9 8 6 4.500M12 10v8" stroke="#fff" strokeWidth="1.200" /></AppGlyph> },
  { label: "Xampp", mark: grey, icon: <AppGlyph><rect x=".5" y=".5" width="23" height="23" rx="3" fill="#f4752c" stroke="#b4582a" /><path d="M9 7c-5-2-6 3-2.500 5C3 14 4 19 9 17l6-10c5-2 6 3 2.500 5 3.500 2 2.500 7-2.500 5z" stroke="#fff" strokeWidth="2.800" strokeLinejoin="round" /></AppGlyph> },
  { label: "Terminal", mark: grey, icon: <AppGlyph><path d="M.5 2.500h23v19H.5z" fill="#111" stroke="#999" strokeWidth=".8" /><path d="M1 3h22v2H1z" fill="#ddd" /><text x="3" y="11.500" fontSize="6" fontFamily="Liberation Mono" fill="#eee">C:\_</text></AppGlyph> },
  { label: "Firefox", mark: grey, icon: <AppGlyph><circle cx="12" cy="13" r="11" fill="#ff5f35" /><path d="M14 0c6 3 9 7 9 13 0 6-5 11-11 11 7-2 9-8 7-12-1-3-5-6-5-12z" fill="#ffc936" /><path d="M2 7c1-1 1-3 1.500-4C5 5 7 6 10 6l-3 5z" fill="#ffa02e" /><circle cx="12" cy="13" r="5.300" fill="#7a4be0" /><path d="M6.500 10c2-1.500 4.500-1 6.500 1-2 0-3 .5-3.500 2z" fill="#ffab33" /></AppGlyph> },
  { label: "Settings", mark: grey, icon: <AppGlyph><circle cx="12" cy="12" r="10" stroke="#6c7880" strokeWidth="4" strokeDasharray="5.500 4.970" /><circle cx="12" cy="12" r="7.200" stroke="#6c7880" strokeWidth="5" /><circle cx="12" cy="12" r="4.300" fill="#d8ecf4" stroke="#1565b0" strokeWidth="2" /></AppGlyph> },
  { label: "Slides", mark: grey, icon: <AppGlyph><circle cx="13" cy="12" r="11" fill="#e0684a" /><path d="M13 1a11 11 0 0 1 11 11H13z" fill="#f49a7e" /><path d="M0 6h12v12H0z" fill="#c23e20" /><text x="2.700" y="15.700" fontSize="10" fontWeight="700" fontFamily="Liberation Sans" fill="#fff">P</text></AppGlyph> },
  { label: "Paint", mark: grey, icon: <AppGlyph><path d="M11 1c7 0 12 3 12 8 0 3-3 4.500-6 4.500s-3 1.500-2 3.500-.5 5.500-4 5.500C4 22.500 0 17 0 12S4 1 11 1z" fill="#1e9bd6" /><g><circle cx="8" cy="5.500" r="2.200" fill="#2aa34a" /><circle cx="4.500" cy="11" r="2.200" fill="#f08a24" /><circle cx="14" cy="5" r="2.200" fill="#e33e2d" /><circle cx="6.500" cy="16.500" r="2.200" fill="#1a4ea0" /></g><path d="M18.500 7h4v7h-4z" fill="#d98b36" /><path d="M18.500 13h4v6l-2 5-2-5z" fill="#e9b563" /></AppGlyph> },
  { label: "Photos", mark: grey, icon: <AppGlyph><path d="M0 1h24v22H0z" fill="#1678d2" /><path d="M0 23v-6L9 8l14 15z" fill="#123f77" /><path d="m12 13 3-2 9 9v3h-4z" fill="#2a62a5" /><circle cx="17" cy="6.500" r="2" fill="#fff" /></AppGlyph> },
];

const SystemBar = () => (
  <Taskbar>
    <Widgets>
      <Svg size={24} box={24}><rect y="1" width="24" height="22" rx="2" fill="#0d5ea8" /><path d="M2 3h9v18H2z" fill="#fff" /><path d="M13 3h9v10h-9z" fill="#69d2fa" /><path d="M13 14h9v7h-9z" fill="#2b96e8" /></Svg>
    </Widgets>
    <Apps>
      {apps.map(a => <AppButton key={a.label} aria-label={a.label} $tint={a.tint} $mark={a.mark} $wide={a.wide}>{a.icon}</AppButton>)}
    </Apps>
    <Tray>
      <Svg size={14} box={14}><path d="m1.500 9.500 5.500-6 5.500 6" stroke="#222" strokeWidth="1.200" /></Svg>
      <Svg size={18} box={18}><path d="M2 8.500A7 7 0 0 1 15 5M15.500 1v4.500H11M2.500 12v5M2.500 12.500h4M3 13a7 7 0 0 0 4 3" stroke="#222" strokeWidth="1.300" /><circle cx="13" cy="13" r="4.200" fill="#ff9d0a" /></Svg>
      <Svg size={18} box={18}><path d="M1.500 7a11 11 0 0 1 15 0M4 10a7.500 7.500 0 0 1 10 0M6.500 12.500a4 4 0 0 1 5 0" stroke="#222" strokeWidth="1.200" /><circle cx="9" cy="15" r="1.300" fill="#222" /></Svg>
      <Svg size={18} box={18}><path d="M1.500 7v4h2.500l4 3.500v-11L4 7zM10.500 6.500a4 4 0 0 1 0 5M12.800 4.500a7 7 0 0 1 0 9M15 2.500a10 10 0 0 1 0 13" stroke="#222" strokeWidth="1.100" /></Svg>
      <Svg size={18} box={18}><rect x="1.500" y="4.500" width="13" height="9" rx="1.500" stroke="#222" strokeWidth="1.200" /><path d="M3.500 6.500h8v5h-8z" fill="#222" /><path d="M16 7.500v3" stroke="#222" strokeWidth="1.600" /></Svg>
      <Clock>23:53<br />16/07/2022</Clock>
      <Badge>2</Badge>
    </Tray>
  </Taskbar>
);

export default function App() {
  return (
    <Screen>
      <GlobalStyle />
      <BrowserTabs />
      <BrowserToolbar />
      <PageArea>
        <Navigation />
        <MainPanel />
      </PageArea>
      <DownloadShelf />
      <SystemBar />
    </Screen>
  );
}
